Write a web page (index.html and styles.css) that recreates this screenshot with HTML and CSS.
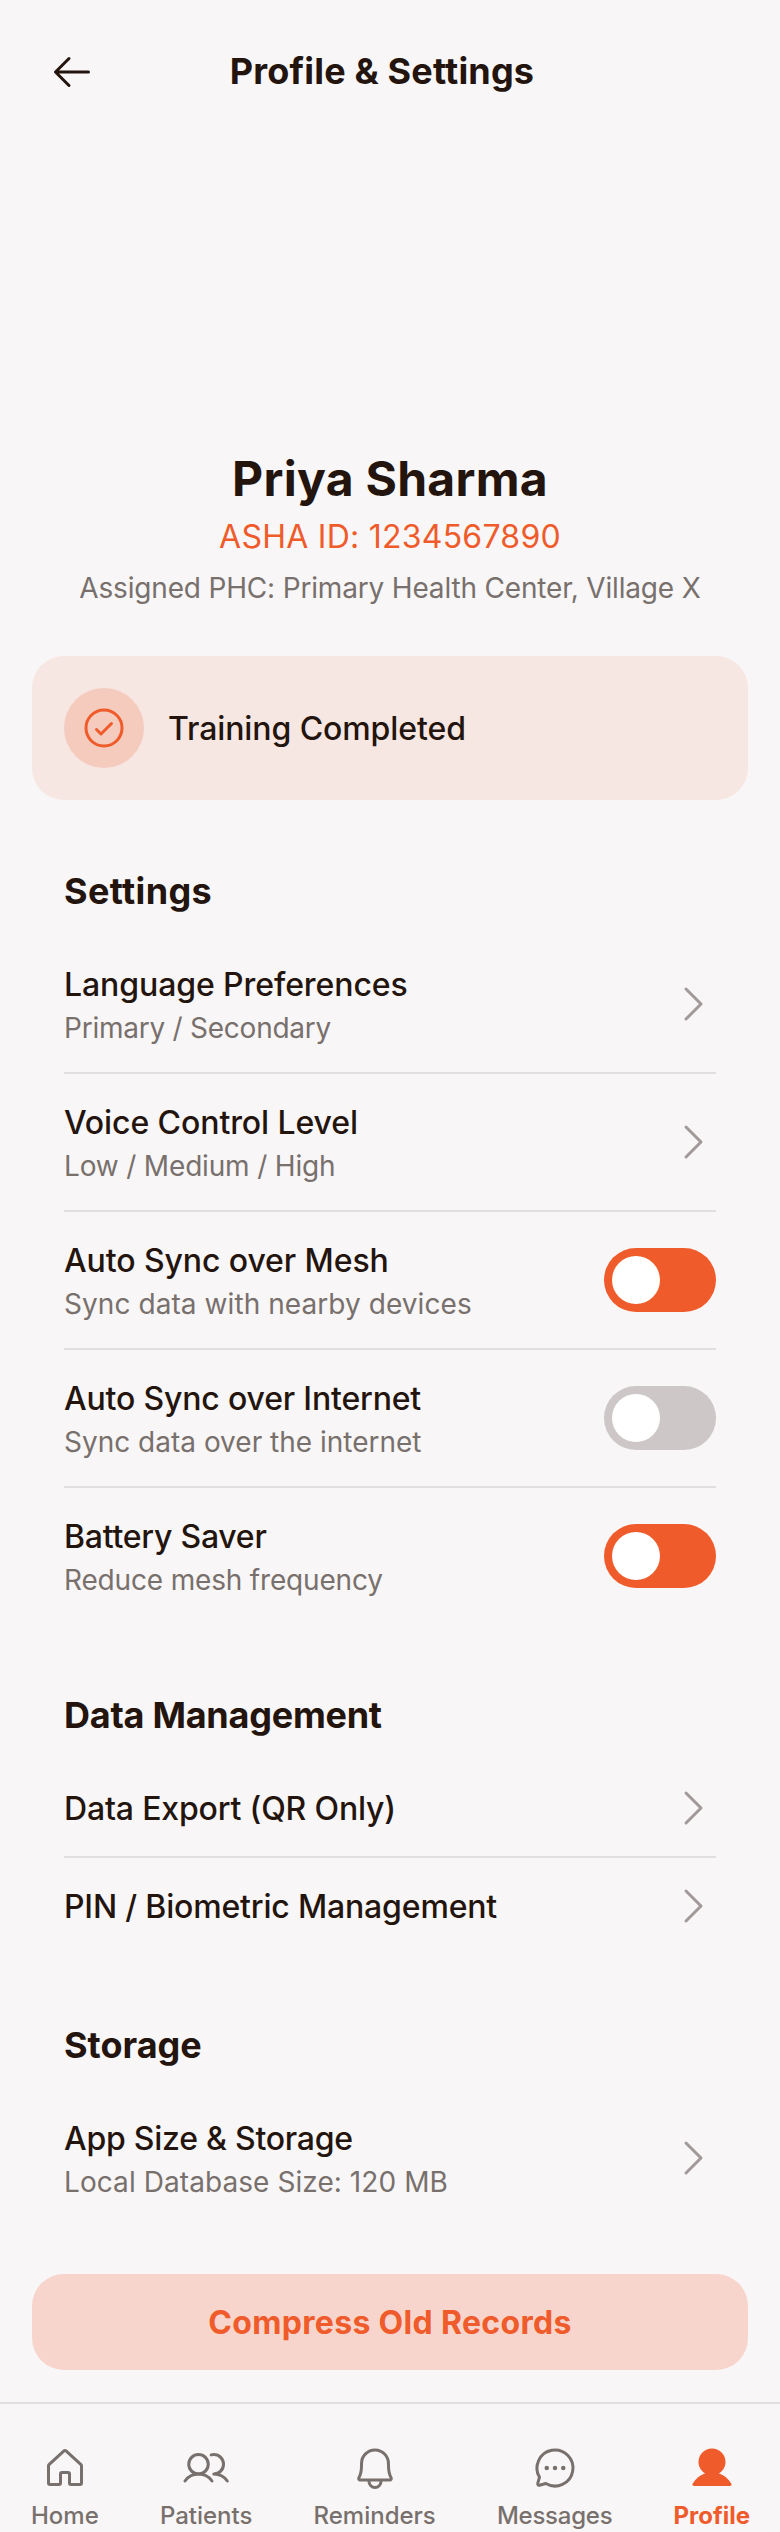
FILE: index.html
```html
<!DOCTYPE html>
<html lang="en">
<head>
<meta charset="utf-8">
<title>Profile &amp; Settings</title>
<link rel="stylesheet" href="styles.css">
</head>
<body>
<svg class="sprite" aria-hidden="true">
  <symbol id="caret" viewBox="0 0 256 256"><polyline points="96 48 176 128 96 208"/></symbol>
</svg>
<div class="screen">
  <header class="topbar">
    <div class="back">
      <svg class="icon" viewBox="0 0 256 256"><path d="M216 128H40M112 56L40 128L112 200"/></svg>
    </div>
    <h1 class="topbar-title">Profile &amp; Settings</h1>
  </header>

  <section class="person">
    <div class="avatar"></div>
    <h2 class="person-name">Priya Sharma</h2>
    <p class="person-id">ASHA ID: 1234567890</p>
    <p class="person-phc">Assigned PHC: Primary Health Center, Village X</p>
  </section>

  <div class="training">
    <div class="training-badge">
      <svg class="icon" viewBox="0 0 256 256"><circle cx="128" cy="128" r="96"/><polyline points="88 136 112 160 168 104"/></svg>
    </div>
    <p class="label tight-s">Training Completed</p>
  </div>

  <section class="group">
    <h3 class="group-title title-wide">Settings</h3>
    <div class="row">
      <div><p class="label tight-s">Language Preferences</p><p class="hint tight-l">Primary / Secondary</p></div>
      <svg class="icon caret"><use href="#caret"/></svg>
    </div>
    <div class="row">
      <div><p class="label tight-s">Voice Control Level</p><p class="hint tight-m">Low / Medium / High</p></div>
      <svg class="icon caret"><use href="#caret"/></svg>
    </div>
    <div class="row">
      <div><p class="label tight-s">Auto Sync over Mesh</p><p class="hint loose">Sync data with nearby devices</p></div>
      <div class="toggle toggle-on"><span class="knob"></span></div>
    </div>
    <div class="row">
      <div><p class="label tight-m">Auto Sync over Internet</p><p class="hint">Sync data over the internet</p></div>
      <div class="toggle"><span class="knob"></span></div>
    </div>
    <div class="row">
      <div><p class="label tight-l">Battery Saver</p><p class="hint tight-m">Reduce mesh frequency</p></div>
      <div class="toggle toggle-on"><span class="knob"></span></div>
    </div>
  </section>

  <section class="group">
    <h3 class="group-title title-tight">Data Management</h3>
    <div class="row">
      <p class="label tight-m">Data Export (QR Only)</p>
      <svg class="icon caret"><use href="#caret"/></svg>
    </div>
    <div class="row">
      <p class="label tight-m">PIN / Biometric Management</p>
      <svg class="icon caret"><use href="#caret"/></svg>
    </div>
  </section>

  <section class="group">
    <h3 class="group-title">Storage</h3>
    <div class="row">
      <div><p class="label tight-l">App Size &amp; Storage</p><p class="hint loose">Local Database Size: 120 MB</p></div>
      <svg class="icon caret"><use href="#caret"/></svg>
    </div>
  </section>

  <button class="compress">Compress Old Records</button>

  <nav class="tabs">
    <div class="tab">
      <svg class="icon" viewBox="0 0 256 256"><path d="M152,208V160a8,8,0,0,0-8-8H112a8,8,0,0,0-8,8v48a8,8,0,0,1-8,8H48a8,8,0,0,1-8-8V115.5a8.3,8.3,0,0,1,2.6-5.9l80-72.7a8,8,0,0,1,10.8,0l80,72.7a8.3,8.3,0,0,1,2.6,5.9V208a8,8,0,0,1-8,8H160A8,8,0,0,1,152,208Z"/></svg>
      <span>Home</span>
    </div>
    <div class="tab">
      <svg class="icon" viewBox="0 0 256 256"><circle cx="88" cy="108" r="52"/><path d="M155.4,57.9A54.5,54.5,0,0,1,169.5,56a52,52,0,0,1,0,104M16,197.4a88,88,0,0,1,144,0M169.5,160a87.9,87.9,0,0,1,72,37.4"/></svg>
      <span>Patients</span>
    </div>
    <div class="tab">
      <svg class="icon" viewBox="0 0 256 256"><path d="M56.2,104a71.9,71.9,0,0,1,72.3-72c39.6.3,71.3,33.2,71.3,72.9V112c0,35.8,7.5,56.6,14.1,68a8,8,0,0,1-6.9,12H49a8,8,0,0,1-6.9-12c6.6-11.4,14.1-32.2,14.1-68ZM96,192v8a32,32,0,0,0,64,0v-8"/></svg>
      <span>Reminders</span>
    </div>
    <div class="tab">
      <svg class="icon" viewBox="0 0 256 256"><path d="M45.4,177A95.9,95.9,0,1,1,79,210.6L45.8,220a7.9,7.9,0,0,1-9.8-9.8Z"/><g class="solid"><circle cx="84" cy="128" r="12"/><circle cx="128" cy="128" r="12"/><circle cx="172" cy="128" r="12"/></g></svg>
      <span class="tight-l">Messages</span>
    </div>
    <div class="tab tab-active">
      <svg class="icon" viewBox="0 0 256 256"><path class="solid" d="M230.93,220a8,8,0,0,1-6.93,4H32a8,8,0,0,1-6.92-12c15.23-26.33,38.7-45.21,66.09-54.16a72,72,0,1,1,73.66,0c27.39,8.95,50.86,27.83,66.09,54.16A8,8,0,0,1,230.93,220Z"/></svg>
      <span>Profile</span>
    </div>
  </nav>
</div>
</body>
</html>
```
FILE: styles.css
```css
* { box-sizing: border-box; margin: 0; padding: 0; }
body { background: #f8f6f7; color: #23140e; font-family: Inter, "Liberation Sans", sans-serif; }
.sprite { display: none; }
.screen { width: 780px; height: 2532px; overflow: hidden; display: flex; flex-direction: column; }
.icon { display: block; flex: none; width: 48px; height: 48px; fill: none; stroke: currentColor; stroke-width: 16; stroke-linecap: round; stroke-linejoin: round; }
.solid { fill: currentColor; stroke: none; }

.topbar { display: flex; align-items: center; padding: 32px 32px 0; }
.back { width: 80px; height: 80px; display: flex; align-items: center; justify-content: center; }
.topbar-title { flex: 1; margin-top: -2px; padding-right: 96px; text-align: center; font-size: 36px; line-height: 45px; font-weight: 700; letter-spacing: 0.18px; }

.person { display: flex; flex-direction: column; align-items: center; text-align: center; }
.avatar { width: 256px; height: 337px; }
.person-name { font-size: 48px; line-height: 60px; font-weight: 700; letter-spacing: 0.28px; }
.person-id { font-size: 32px; line-height: 48px; margin-top: 4px; color: #ef5b2a; letter-spacing: 0.25px; }
.person-phc { font-size: 28px; line-height: 42px; margin-top: 6px; color: #78706c; letter-spacing: -0.175px; }

.training { display: flex; align-items: center; gap: 24px; height: 144px; margin: 47px 32px 0; padding: 32px; border-radius: 32px; background: #f6e7e2; }
.training-badge { width: 80px; height: 80px; border-radius: 50%; background: #f5cbbe; color: #ef5b2a; display: flex; align-items: center; justify-content: center; }

.group { padding: 0 64px; }
.group-title { font-size: 36px; line-height: 46px; font-weight: 700; margin-top: 68px; margin-bottom: 22px; }
.title-wide { letter-spacing: 0.37px; }
.title-tight { letter-spacing: -0.25px; }
.row { display: flex; align-items: center; justify-content: space-between; padding: 24px 0; }
.row + .row { border-top: 2px solid #e1dedf; }
.label { font-size: 32px; line-height: 48px; font-weight: 500; padding-top: 1px; margin-bottom: -1px; }
.hint { font-size: 28px; line-height: 40px; color: #78706c; }
.tight-s { letter-spacing: -0.09px; }
.tight-m { letter-spacing: -0.17px; }
.tight-l { letter-spacing: -0.24px; }
.loose { letter-spacing: 0.07px; }
.caret { color: #a29a98; }
.toggle { width: 112px; height: 64px; padding: 8px; border-radius: 32px; background: #cdc7c7; }
.toggle-on { background: #ef5b2a; }
.knob { display: block; width: 48px; height: 48px; border-radius: 50%; background: #fff; }

.compress { height: 96px; margin: 48px 32px 0; padding-top: 2px; flex: none; border: 0; border-radius: 32px; background: #f7d5cc; color: #ef5b2a; font: 700 32px/48px Inter, "Liberation Sans", sans-serif; letter-spacing: 0.32px; }

.tabs { display: flex; justify-content: space-between; margin-top: 32px; padding: 40px 30px 0 31px; border-top: 2px solid #e1dedf; flex: none; }
.tab { display: flex; flex-direction: column; align-items: center; gap: 8px; font-size: 24px; line-height: 32px; font-weight: 500; color: #78706c; }
.tab-active { font-weight: 700; color: #ef5b2a; }
```
